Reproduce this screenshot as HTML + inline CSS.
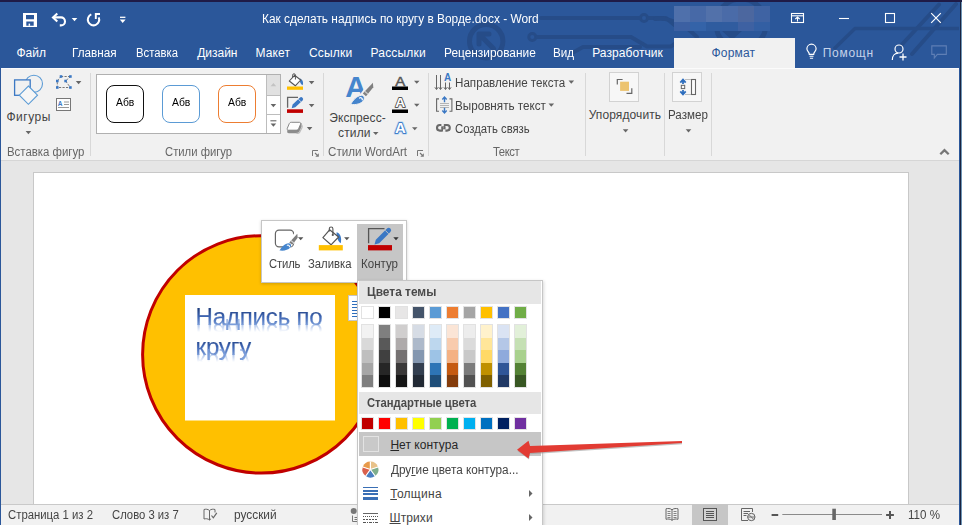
<!DOCTYPE html>
<html lang="ru">
<head>
<meta charset="utf-8">
<title>Word</title>
<style>
html,body{margin:0;padding:0;}
html{width:962px;height:525px;overflow:hidden;}
body{width:962px;height:525px;overflow:hidden;position:relative;background:#2b579a;font-family:"Liberation Sans",sans-serif;font-size:13px;}
.a{position:absolute;}
.t{position:absolute;white-space:nowrap;line-height:16px;height:16px;transform-origin:0 50%;}
#topline{left:0;top:0;width:962px;height:2px;background:#1f1b47;}
#rdark{left:960px;top:0;width:1px;height:525px;background:#1a2340;}
#rlight{left:961px;top:2px;width:1px;height:523px;background:#6f96b6;}
#title{left:0;top:2px;width:959px;height:66px;background:#2b579a;overflow:hidden;}
#ribbon{left:1px;top:68px;width:958px;height:92px;background:#f1f1f1;border-top:1px solid #fbfbfb;box-sizing:border-box;}
#ribline{left:1px;top:160px;width:958px;height:1px;background:#d6d6d6;}
#doc{left:1px;top:161px;width:958px;height:343px;background:#e6e6e6;}
#page{left:33px;top:172px;width:874px;height:340px;background:#fff;border:1px solid #c8c8c8;}
#status{left:1px;top:504px;width:958px;height:21px;background:#f1f1f1;border-top:1px solid #c9c9c9;box-sizing:border-box;}
#fmt{left:674px;top:38px;width:121px;height:30px;background:#f1f1f1;}
.sep{position:absolute;width:1px;background:#d8d8d8;top:73px;height:83px;}
svg{position:absolute;overflow:visible;}
</style>
</head>
<body>
<div id="w" style="position:absolute;left:0;top:0;width:962px;height:525px;overflow:hidden">
<div class="a" id="title">
<svg width="959" height="66" viewBox="0 2 959 66" style="left:0;top:0" fill="none" stroke="#264c88" stroke-width="4" stroke-linecap="round" stroke-linejoin="round">
<circle cx="486.200" cy="41.200" r="16.700" stroke-width="5"/>
<path d="M493.600 48.700 L479.500 34.500 M479 44 V34 H489" stroke-width="5"/>
<circle cx="532.300" cy="37" r="3.500" stroke-width="3"/>
<path d="M537 37 H631 L647 46.500 H671 L677 42"/>
<circle cx="644" cy="18" r="3.500" stroke-width="3"/>
<path d="M541 18 H639.500 M648.500 18 H666 L675 25.500 H700"/>
<path d="M574 52 L583 47 H640"/>
<circle cx="741" cy="24" r="25" stroke-width="5"/>
<path d="M722 31 H742 L732 40 Z" fill="#264c88" stroke="none"/>
<path d="M655 19 C670 17 684 24 697 37"/>
<path d="M835 48 L855 28.500 H960" stroke-width="3.500"/>
<path d="M901 45.500 L939 4.500"/>
<path d="M912 54 L956 4"/>
</svg>
<div class="a" style="left:674px;top:4px;width:16px;height:16px;background:#4f70ab"></div>
<div class="a" style="left:690px;top:4px;width:16px;height:16px;background:#4769a7"></div>
<div class="a" style="left:706px;top:4px;width:16px;height:16px;background:#5271aa"></div>
<div class="a" style="left:722px;top:4px;width:16px;height:16px;background:#4a6ba8"></div>
<div class="a" style="left:738px;top:4px;width:16px;height:16px;background:#4c679f"></div>
<div class="a" style="left:754px;top:4px;width:16px;height:16px;background:#3f63a3"></div>
<div class="a" style="left:674px;top:20px;width:16px;height:9px;background:#3c60a2"></div>
<div class="a" style="left:690px;top:20px;width:16px;height:9px;background:#3463a8"></div>
<div class="a" style="left:706px;top:20px;width:16px;height:9px;background:#2f5c9f"></div>
<div class="a" style="left:722px;top:20px;width:16px;height:9px;background:#305c9f"></div>
<div class="a" style="left:738px;top:20px;width:16px;height:9px;background:#3e61a2"></div>
<div class="a" style="left:754px;top:20px;width:16px;height:9px;background:#335fa3"></div>

</div>
<div class="a" id="topline"></div>
<div class="a" id="rdark"></div>
<div class="a" id="rlight"></div>
<div class="a" id="fmt"></div>
<div class="a" id="ribbon"></div>
<div class="a" id="ribline"></div>
<div class="a" id="doc"></div>
<div class="a" id="page"></div>
<div class="a" id="status"></div>
<!-- left window border -->
<div class="a" style="left:0;top:68px;width:1px;height:457px;background:#2b579a"></div>
<div class="a" style="left:959px;top:2px;width:1px;height:523px;background:#2b579a"></div>
<!-- QAT icons -->
<svg width="962" height="66" style="left:0;top:0" fill="none" stroke="#fff" stroke-width="1.6">
 <!-- save -->
 <path d="M23 13 H37 V27 H23 Z M26 15 V19.300 H34 V15 Z M26.300 21.600 V25.800 H33.700 V21.600 Z" fill="#fff" stroke="none" fill-rule="evenodd"/>
 <rect x="28.600" y="23.600" width="1.500" height="2.200" fill="#fff" stroke="none"/>
 <!-- undo -->
 <path d="M57.300 13.400 L53 17.400 L57.300 21.400" stroke-width="2.100" stroke-linejoin="miter"/>
 <path d="M53.500 17.400 H61 A4 4 0 0 1 61 25.400 H59.800" stroke-width="2.100"/>
 <path d="M71.700 18 h5.600 l-2.800 3.200 z" fill="#fff" stroke="none"/>
 <!-- redo/repeat -->
 <path d="M91.300 14.400 A5.700 5.700 0 1 0 98.700 17.300" stroke-width="2"/>
 <path d="M100 14 H95.800 V19" stroke-width="1.900" stroke-linejoin="miter"/>
 <!-- customize -->
 <path d="M120 17.300 h5.400" stroke-width="1.300"/>
 <path d="M119.800 19.600 h5.800 l-2.900 3.300 z" fill="#fff" stroke="none"/>
 <!-- window buttons -->
 <rect x="791.5" y="13.5" width="12" height="9" stroke-width="1.1"/>
 <path d="M791.5 15.8 H803.5" stroke-width="1.1"/>
 <path d="M797.5 21.5 V17.2 M795.2 19.2 L797.5 17 L799.8 19.2" stroke-width="1.1"/>
 <path d="M839 18.5 H849" stroke-width="1.1"/>
 <rect x="885.5" y="13.5" width="9" height="9" stroke-width="1.1"/>
 <path d="M931.2 13.2 L940.8 22.8 M940.8 13.2 L931.2 22.8" stroke-width="1.2"/>
 <!-- bulb -->
 <path d="M809.3 54.3 C809.3 52 806.9 51.3 806.9 48.8 A4.6 4.6 0 0 1 816.1 48.800000000000004 C816.1 51.3 813.7 52 813.7 54.3 Z" stroke-width="1.2"/>
 <path d="M809.5 56.3 H813.5 M809.9 58.3 H813.1" stroke-width="1.1"/>
 <!-- share -->
 <circle cx="899" cy="49" r="4" stroke-width="1.2"/>
 <path d="M892.3 60 C892.3 55.5 895 53.2 898.2 53.2" stroke-width="1.2"/>
 <path d="M899.5 57 H906.5 M903 53.5 V60.5" stroke-width="1.3"/>
 <!-- comment -->
 <path d="M931.8 45.9 H946.3 V54.4 H937.3 L934.3 58 V54.4 H931.8 Z" stroke="#5f7fb5" stroke-width="1.1"/>
</svg>
<!-- ribbon separators -->
<div class="sep" style="left:90px"></div>
<div class="sep" style="left:323px"></div>
<div class="sep" style="left:428px"></div>
<div class="sep" style="left:585px"></div>
<div class="sep" style="left:664px"></div>
<div class="sep" style="left:711px"></div>
<!-- gallery -->
<div class="a" style="left:96px;top:74px;width:185px;height:60px;background:#fff;border:1px solid #b0b0b0;box-sizing:border-box"></div>
<div class="a" style="left:266px;top:75px;width:14px;height:21px;background:#e1e1e1;border-left:1px solid #bdbdbd;border-bottom:1px solid #bdbdbd;box-sizing:border-box"></div>
<div class="a" style="left:266px;top:96px;width:14px;height:19px;border-left:1px solid #bdbdbd;border-bottom:1px solid #bdbdbd;box-sizing:border-box"></div>
<div class="a" style="left:266px;top:115px;width:14px;height:18px;border-left:1px solid #bdbdbd;box-sizing:border-box"></div>
<div class="a" style="left:106px;top:85px;width:38px;height:38px;border:1.5px solid #111;border-radius:8px;box-sizing:border-box"></div>
<div class="a" style="left:162px;top:85px;width:38px;height:38px;border:1.5px solid #5b9bd5;border-radius:8px;box-sizing:border-box"></div>
<div class="a" style="left:218px;top:85px;width:38px;height:38px;border:1.5px solid #ed7d31;border-radius:8px;box-sizing:border-box"></div>
<!-- ribbon icons -->
<svg width="962" height="170" style="left:0;top:0" fill="none">
 <!-- gallery arrows -->
 <path d="M270.600 86.200 h5.600 l-2.800 -3.200 z" fill="#c3c3c3"/>
 <path d="M270.600 104 h5.600 l-2.800 3.200 z" fill="#666"/>
 <path d="M270.400 120.800 h6" stroke="#666" stroke-width="1.100"/>
 <path d="M270.600 123.600 h5.600 l-2.800 3.200 z" fill="#666"/>
 <!-- shapes big icon -->
 <circle cx="33.900" cy="83.800" r="8.600" stroke="#5b9bd5" stroke-width="1.100" fill="none"/>
 <rect x="14.600" y="79.900" width="15.600" height="15.400" stroke="#3b78c4" stroke-width="1.300" fill="#f1f1f1"/>
 <path d="M28.400 86 L37.500 95.200 L28.400 104.300 L19.300 95.200 Z" stroke="#5b9bd5" stroke-width="1.100" fill="#f6f6f6"/>
 <path d="M25.600 131 h5.600 l-2.800 3.200 z" fill="#666"/>
 <!-- edit points -->
 <path d="M61 76.500 H70.400 M61 76.500 L57.300 81 V87.500 H70.400 M70.400 76.500 L65.600 81 L70.400 87.500" stroke="#777" stroke-width="1" stroke-dasharray="2.200 1.300"/>
 <g fill="#3b78c4"><rect x="59.700" y="75.200" width="2.600" height="2.600"/><rect x="69.100" y="75.200" width="2.600" height="2.600"/><rect x="56" y="79.700" width="2.600" height="2.600"/><rect x="64.300" y="79.700" width="2.600" height="2.600"/><rect x="56" y="86.200" width="2.600" height="2.600"/><rect x="69.100" y="86.200" width="2.600" height="2.600"/></g>
 <path d="M75.800 81 h5.600 l-2.800 3.200 z" fill="#666"/>
 <!-- text box -->
 <rect x="56.500" y="98.500" width="14" height="12" stroke="#777" stroke-width="1" fill="#fdfdfd"/>
 <text x="57.800" y="105.600" font-family="Liberation Sans" font-weight="bold" font-size="6.500" fill="#3b78c4">A</text>
 <path d="M64 102 H69 M64 104.500 H69 M58 107.500 H69" stroke="#999" stroke-width="1"/>
 <!-- shape fill -->
 <path d="M299.700 78.500 C302.500 79 303.800 82.500 302.600 85.200 C300.600 84.500 299.500 81.500 299.700 78.500 Z" fill="#3b78c4"/>
 <path d="M289.300 81 L294.600 75.300 L300.700 80 L295.300 85.800 Z" stroke="#555" stroke-width="1.100" fill="#fff" stroke-linejoin="round"/>
 <path d="M295.400 79.500 V75.200 A1.400 1.400 0 0 0 292.600 75.200 V77.300" stroke="#555" stroke-width="1" fill="none"/>
 <rect x="287" y="86.500" width="16" height="3.300" fill="#ffc000"/>
 <path d="M308.800 81 h5.600 l-2.800 3.200 z" fill="#666"/>
 <!-- shape outline -->
 <path d="M287.600 107.800 V97.300 H298" stroke="#666" stroke-width="1.300"/>
 <path d="M291.700 108.200 L292.600 104.600 L299.800 97.800 A1.800 1.800 0 0 1 302.600 100.400 L295.300 107.300 Z" fill="#3b78c4"/>
 <path d="M298.400 99.200 L301.100 101.900" stroke="#f1f1f1" stroke-width=".8"/>
 <rect x="287" y="109.300" width="16" height="3.600" fill="#c00000"/>
 <path d="M308.800 104 h5.600 l-2.800 3.200 z" fill="#666"/>
 <!-- shape effects -->
 <path d="M291.500 123 H300 C302 123 302.600 124.500 301.800 126.200 L299.500 131.300 C298.800 132.800 297.500 133.300 296 133.300 H289 C287.300 133.300 286.700 132 287.500 130.300 L289.500 125 C290 123.700 290.500 123 291.500 123 Z" fill="#8c8c8c"/>
 <path d="M300.500 124.500 C302.300 125 302.500 126.500 301.800 128 L299.800 132 C299 133 297.500 133.500 296.500 133.200" stroke="#bdbdbd" stroke-width="1.300" fill="none"/>
 <path d="M291.300 122.300 H299.300 C300.600 122.300 301 123.200 300.500 124.300 L298.700 128.600 C298.200 129.700 297.400 130.200 296.200 130.200 H288.400 C287.200 130.200 286.900 129.400 287.300 128.300 L289.200 123.800 C289.600 122.800 290.200 122.300 291.300 122.300 Z" fill="#fefefe" stroke="#7a7a7a" stroke-width=".9"/>
 <path d="M306.800 127 h5.600 l-2.800 3.200 z" fill="#666"/>
 <!-- dialog launchers -->
 <path d="M312.5 156.0 V150.5 H318.0" stroke="#777" stroke-width="1" fill="none"/>
 <path d="M315.0 153.0 L317.5 155.5" stroke="#777" stroke-width="1.100"/>
 <path d="M318.8 153.3 V156.8 H315.3 Z" fill="#777"/>
 <path d="M417.5 156.0 V150.5 H423.0" stroke="#777" stroke-width="1" fill="none"/>
 <path d="M420.0 153.0 L422.5 155.5" stroke="#777" stroke-width="1.100"/>
 <path d="M423.8 153.3 V156.8 H420.3 Z" fill="#777"/>
 <!-- WordArt quick styles A -->
 <text x="345.300" y="96.800" font-family="Liberation Sans" font-weight="bold" font-size="28.800" fill="#4585cd" textLength="21.400" lengthAdjust="spacingAndGlyphs">A</text>
 <path d="M362 97.500 L372 84.500" stroke="#f1f1f1" stroke-width="7"/>
 <path d="M372.900 82.800 L373.300 87.300 L366 96.200 L362.800 93.600 Z" fill="#808080"/>
 <path d="M364.700 91.300 L367.900 93.900" stroke="#c8c8c8" stroke-width="1.300"/>
 <path d="M350.500 104.500 C353 100.500 356 96 361.500 95.300 C364.500 95.600 365 98.500 363.500 100.500 C361 104 356 105 350.500 104.500 Z" fill="#4585cd" stroke="#f1f1f1" stroke-width="1"/>
 <path d="M359.500 98 C361 97.300 362.500 98 362.300 99.800" stroke="#fff" stroke-width="1.300" fill="none" stroke-linecap="round"/>
 <path d="M373 132 h5.500 l-2.750 3 z" fill="#666"/>
 <!-- text fill A -->
 <text x="395.200" y="85.800" font-family="Liberation Sans" font-size="13.500" fill="#555" stroke="#555" stroke-width=".45" textLength="10" lengthAdjust="spacingAndGlyphs">A</text>
 <rect x="392" y="86.500" width="16" height="3.500" fill="#000"/>
 <path d="M414 80.800 h5.500 l-2.750 3 z" fill="#666"/>
 <!-- text outline A -->
 <text x="395.300" y="107.400" font-family="Liberation Sans" font-weight="bold" font-size="13.500" fill="#555" stroke="#555" stroke-width="1.800" stroke-linejoin="round" textLength="10" lengthAdjust="spacingAndGlyphs">A</text>
 <text x="395.300" y="107.400" font-family="Liberation Sans" font-weight="bold" font-size="13.500" fill="#fff" textLength="10" lengthAdjust="spacingAndGlyphs">A</text>
 <rect x="392" y="109.500" width="16" height="3.500" fill="#000"/>
 <path d="M414 103.800 h5.500 l-2.750 3 z" fill="#666"/>
 <!-- text effects A -->
 <text x="394.900" y="132.600" font-family="Liberation Sans" font-weight="bold" font-size="15.500" fill="#b9d4ef" stroke="#c4dbf2" stroke-width="3.600" stroke-linejoin="round" textLength="10.800" lengthAdjust="spacingAndGlyphs">A</text>
 <text x="394.900" y="132.600" font-family="Liberation Sans" font-weight="bold" font-size="15.500" fill="#3f7dc8" stroke="#3f7dc8" stroke-width="2" stroke-linejoin="round" textLength="10.800" lengthAdjust="spacingAndGlyphs">A</text>
 <text x="394.900" y="132.600" font-family="Liberation Sans" font-weight="bold" font-size="15.500" fill="#fff" textLength="10.800" lengthAdjust="spacingAndGlyphs">A</text>
 <path d="M412 127.300 h5.500 l-2.750 3 z" fill="#666"/>
 <!-- text direction icon -->
 <path d="M436.500 75 V89 M440.500 75 V89 M445.500 82.500 V89 M449.500 82.500 V89" stroke="#666" stroke-width="1"/>
 <path d="M434.900 87.300 l1.600 2.300 l1.600 -2.300 M438.900 87.300 l1.600 2.300 l1.600 -2.300 M443.900 87.300 l1.600 2.300 l1.600 -2.300 M447.900 87.300 l1.600 2.300 l1.600 -2.300" stroke="#666" stroke-width="1" fill="none"/>
 <text x="444" y="81.400" font-family="Liberation Sans" font-weight="bold" font-size="10" fill="#3b78c4" textLength="7.200" lengthAdjust="spacingAndGlyphs">A</text>
 <!-- align text icon -->
 <path d="M439 98.900 H436.600 V111.300 H439 M449.500 98.900 H451.900 V111.300 H449.500" stroke="#666" stroke-width="1.100"/>
 <path d="M440 103.500 H449 M440 105.500 H449 M440 107.500 H449" stroke="#b4b4b4" stroke-width="1" shape-rendering="crispEdges"/>
 <path d="M444.500 97.300 V102.300 M442.300 99.500 L444.500 97.100 L446.700 99.500 M444.500 107.800 V112.800 M442.300 110.500 L444.500 112.900 L446.700 110.500" stroke="#3b78c4" stroke-width="1.400" fill="none"/>
 <rect x="443.300" y="102.500" width="2.400" height="5.600" fill="#f1f1f1" opacity="0"/>
 <!-- link icon -->
 <rect x="437" y="125" width="7.600" height="5.600" rx="2.800" stroke="#6a6a6a" stroke-width="2.100" fill="none"/>
 <rect x="442.200" y="125" width="7.600" height="5.600" rx="2.800" stroke="#6a6a6a" stroke-width="2.100" fill="none"/>
 <path d="M441.400 125 H443.800" stroke="#f1f1f1" stroke-width="2.600"/>
 <path d="M443 130.600 H445.400" stroke="#f1f1f1" stroke-width="2.600"/>
 <path d="M440.200 125 H444.600 M442.200 130.600 H446.600" stroke="#6a6a6a" stroke-width="2.100" opacity="0"/>
 <path d="M568.500 80.500 h5.600 l-2.800 3.200 z" fill="#666"/>
 <path d="M548.500 103.500 h5.600 l-2.800 3.200 z" fill="#666"/>
 <!-- arrange -->
 <rect x="609.500" y="72.500" width="29" height="29" fill="#f7f7f7" stroke="#d2d2d2"/>
 <path d="M617.300 84.500 V79.500 H622.600" stroke="#666" stroke-width="1.200"/>
 <path d="M626.500 93.400 H631.800 V88.300" stroke="#666" stroke-width="1.200"/>
 <rect x="620.100" y="81.700" width="8.900" height="9.200" fill="#ecc36f"/>
 <path d="M622.800 129.300 h5.600 l-2.800 3.200 z" fill="#666"/>
 <!-- size -->
 <rect x="672.500" y="72.500" width="29" height="29" fill="#f7f7f7" stroke="#d2d2d2"/>
 <rect x="691.500" y="79.500" width="4" height="15" stroke="#666" stroke-width="1.100" fill="#fbfbfb"/>
 <path d="M685.500 79.500 H691 M685.500 94.500 H691" stroke="#888" stroke-width="1" stroke-dasharray="1 1"/>
 <path d="M683 79.800 V84 M680.300 82.600 L683 79.600 L685.700 82.600 M683 90 V94.200 M680.300 91.400 L683 94.400 L685.700 91.400" stroke="#2e6ebd" stroke-width="1.800" fill="none"/>
 <rect x="681.300" y="85.300" width="3.400" height="3.300" stroke="#666" stroke-width="1" fill="#fbfbfb"/>
 <path d="M685.700 129.300 h5.600 l-2.800 3.200 z" fill="#666"/>
 <!-- collapse chevron -->
 <path d="M940.300 154.300 L944.500 150.100 L948.700 154.300" stroke="#777" stroke-width="2.300"/>
</svg>
<!-- circle + textbox -->
<svg width="962" height="525" style="left:0;top:0">
 <defs>
  <linearGradient id="tg" x1="0" y1="0" x2="0" y2="1"><stop offset="0" stop-color="#2b4f94"/><stop offset="1" stop-color="#7fa2dc"/></linearGradient>
 </defs>
 <circle cx="261.300" cy="354.400" r="118.700" fill="#ffc000" stroke="#c00000" stroke-width="3"/>
 <rect x="185" y="295" width="150" height="125.500" fill="#fff"/>
</svg>
<!-- status bar icons -->
<svg width="962" height="525" style="left:0;top:0" fill="none">
 <rect x="692" y="504" width="36" height="21" fill="#c6c6c6"/>
 <!-- proofing -->
 <path d="M209.500 510.500 C208 509 205.500 509 204 509.500 V519 C205.500 518.500 208 518.500 209.500 520 M209.500 510.500 V520 M209.500 510.500 C211 509 213.500 509 215 509.500 V512.500 M209.500 520 C210 519.500 210.500 519.200 211 519" stroke="#666" stroke-width="1"/>
 <path d="M211.500 515.500 L213.300 517.800 L216.800 512.800" stroke="#666" stroke-width="1.200"/>
 <!-- read mode -->
 <path d="M672 509.800 C670.500 508.300 667.500 508.300 666 508.800 V519.300 C667.500 518.800 670.500 518.800 672 520.300 C673.500 518.800 676.500 518.800 678 519.300 V508.800 C676.500 508.300 673.500 508.300 672 509.800 Z M672 509.800 V520.300" stroke="#666" stroke-width="1"/>
 <path d="M667.500 511.500 H670.500 M667.500 513.500 H670.500 M667.500 515.500 H670.500 M667.500 517.500 H670.500 M673.500 511.500 H676.500 M673.500 513.500 H676.500 M673.500 515.500 H676.500 M673.500 517.500 H676.500" stroke="#777" stroke-width=".9"/>
 <!-- print layout -->
 <rect x="703.500" y="508.500" width="13" height="12" stroke="#555" stroke-width="1" fill="#d2d2d2"/>
 <path d="M706 511.500 H714 M706 513.500 H714 M706 515.500 H714 M706 517.500 H714" stroke="#555" stroke-width="1" shape-rendering="crispEdges"/>
 <!-- web layout -->
 <path d="M748 520.500 H741.500 V508.500 H752.500 V512" stroke="#666" stroke-width="1"/>
 <path d="M743.500 511.500 H750 M743.500 513.500 H748 M743.500 515.500 H746.500" stroke="#666" stroke-width="1"/>
 <circle cx="751.300" cy="517" r="3.700" stroke="#666" stroke-width="1" fill="#e9e9e9"/>
 <path d="M748.700 514.400 L753.900 519.600 M747.800 517 H754.800" stroke="#666" stroke-width=".9"/>
 <!-- zoom -->
 <path d="M771.600 515 H778.200" stroke="#555" stroke-width="2"/>
 <path d="M782.300 514.500 H882" stroke="#8a8a8a" stroke-width="1"/>
 <rect x="832.300" y="508.700" width="3.600" height="11.300" fill="#666"/>
 <path d="M886.100 515 H893.900 M890 511.100 V518.900" stroke="#555" stroke-width="2"/>
</svg>
<!-- wordart text -->
<div class="a wa" style="left:195.600px;top:302.500px;">Надпись по</div>
<div class="a wa" style="left:195.600px;top:332.500px;">кругу</div>
<div class="a wa wr" style="left:195.600px;top:318.300px;">Надпись по</div>
<div class="a wa wr" style="left:195.600px;top:348.300px;">кругу</div>
<style>
.wa{font-size:24px;line-height:28px;letter-spacing:-.17px;white-space:nowrap;color:transparent;-webkit-text-stroke:.12px #4468b0;background:linear-gradient(#21407f 22%,#3e66b4 50%,#7fa2dd 82%);-webkit-background-clip:text;background-clip:text;}
.wr{transform:scaleY(-1);-webkit-text-stroke:0;background:#7ea0dc;-webkit-background-clip:text;background-clip:text;-webkit-mask-image:linear-gradient(transparent 50%,rgba(0,0,0,.7) 80%);mask-image:linear-gradient(transparent 50%,rgba(0,0,0,.7) 80%);}
</style>

<span class="t" style="left:262.21px;top:10.7px;font-size:12px;color:#fff;transform:scaleX(0.990);">Как сделать надпись по кругу в Ворде.docx - Word</span>
<span class="t" style="left:16.47px;top:44.8px;font-size:12px;color:#fff;">Файл</span>
<span class="t" style="left:71.85px;top:44.8px;font-size:12px;color:#fff;transform:scaleX(0.978);">Главная</span>
<span class="t" style="left:135.87px;top:44.8px;font-size:12px;color:#fff;transform:scaleX(0.940);">Вставка</span>
<span class="t" style="left:197.13px;top:44.8px;font-size:12px;color:#fff;">Дизайн</span>
<span class="t" style="left:255.53px;top:44.8px;font-size:12px;color:#fff;letter-spacing:0.12px;">Макет</span>
<span class="t" style="left:308.97px;top:44.8px;font-size:12px;color:#fff;letter-spacing:0.18px;">Ссылки</span>
<span class="t" style="left:370.52px;top:44.8px;font-size:12px;color:#fff;letter-spacing:0.18px;">Рассылки</span>
<span class="t" style="left:443.82px;top:44.8px;font-size:12px;color:#fff;transform:scaleX(0.990);">Рецензирование</span>
<span class="t" style="left:553.23px;top:44.8px;font-size:12px;color:#fff;transform:scaleX(0.968);">Вид</span>
<span class="t" style="left:592.20px;top:44.8px;font-size:12px;color:#fff;letter-spacing:0.06px;">Разработчик</span>
<span class="t" style="left:711.47px;top:44.8px;font-size:12px;color:#2b579a;letter-spacing:0.19px;">Формат</span>
<span class="t" style="left:822.63px;top:44.8px;font-size:12px;color:#c5d3ea;letter-spacing:0.75px;">Помощн</span>
<span class="t" style="left:6.47px;top:109.0px;font-size:12px;color:#444444;letter-spacing:0.52px;">Фигуры</span>
<span class="t" style="left:6.87px;top:144.0px;font-size:12px;color:#666666;transform:scaleX(0.951);">Вставка фигур</span>
<span class="t" style="left:116.00px;top:94.0px;font-size:11px;color:#000;transform:scaleX(0.940);">Абв</span>
<span class="t" style="left:171.80px;top:94.0px;font-size:11px;color:#000;transform:scaleX(0.944);">Абв</span>
<span class="t" style="left:227.80px;top:94.0px;font-size:11px;color:#000;transform:scaleX(0.944);">Абв</span>
<span class="t" style="left:164.86px;top:144.0px;font-size:12px;color:#666666;transform:scaleX(0.940);">Стили фигур</span>
<span class="t" style="left:329.22px;top:109.5px;font-size:12px;color:#444444;letter-spacing:0.09px;">Экспресс-</span>
<span class="t" style="left:338.02px;top:124.5px;font-size:12px;color:#444444;letter-spacing:0.14px;">стили</span>
<span class="t" style="left:327.86px;top:144.0px;font-size:12px;color:#666666;transform:scaleX(0.967);">Стили WordArt</span>
<span class="t" style="left:455.04px;top:75.2px;font-size:12px;color:#444444;transform:scaleX(0.969);">Направление текста</span>
<span class="t" style="left:455.04px;top:97.9px;font-size:12px;color:#444444;transform:scaleX(0.973);">Выровнять текст</span>
<span class="t" style="left:455.24px;top:121.0px;font-size:12px;color:#444444;transform:scaleX(0.940);">Создать связь</span>
<span class="t" style="left:492.94px;top:144.0px;font-size:12px;color:#666666;letter-spacing:-0.45px;transform:scaleX(0.940);">Текст</span>
<span class="t" style="left:588.66px;top:107.0px;font-size:12px;color:#444444;letter-spacing:0.10px;">Упорядочить</span>
<span class="t" style="left:667.86px;top:107.0px;font-size:12px;color:#444444;transform:scaleX(0.966);">Размер</span>
<span class="t" style="left:8.00px;top:506.5px;font-size:12px;color:#444444;transform:scaleX(0.945);">Страница 1 из 2</span>
<span class="t" style="left:112.00px;top:506.5px;font-size:12px;color:#444444;transform:scaleX(0.940);">Слово 3 из 7</span>
<span class="t" style="left:234.02px;top:506.5px;font-size:12px;color:#444444;transform:scaleX(0.989);">русский</span>
<span class="t" style="left:908.26px;top:506.5px;font-size:12px;color:#444444;transform:scaleX(0.965);">110 %</span>
<div class="a" style="left:348px;top:295px;width:14px;height:26px;background:#fff;border:1px solid #c6c6c6;box-sizing:border-box"></div>
<svg width="20" height="30" style="left:348px;top:295px" fill="none" stroke="#2e6ebd" stroke-width="1.2"><path d="M4 6.500 H12 M4 9.500 H12 M4 12.500 H12 M4 15.500 H12 M4 18.500 H12 M4 21.500 H12"/></svg>
<div class="a" style="left:261px;top:220px;width:146px;height:63px;background:#fff;border:1px solid #c6c6c6;box-sizing:border-box;box-shadow:0 1px 3px rgba(0,0,0,.18)"></div>
<div class="a" style="left:357px;top:224px;width:46px;height:57px;background:#c6c6c6"></div>
<svg width="962" height="300" style="left:0;top:0" fill="none">
 <!-- style icon -->
 <rect x="275.400" y="230.200" width="18.200" height="16.600" rx="3.600" stroke="#666" stroke-width="1.200" fill="#fff"/>
 <path d="M286.500 247.500 L297.500 234" stroke="#fff" stroke-width="6"/>
 <path d="M297.300 233.800 L297.700 237.800 L292.300 244.800 L289.300 242.500 Z" fill="#7d7d7d"/>
 <path d="M290.900 240.600 L293.900 242.900" stroke="#d0d0d0" stroke-width="1.200"/>
 <path d="M279.500 250.500 C281.500 247 284.500 243.600 288.800 243.300 C291.300 243.600 291.600 246 290.300 247.600 C288 250.300 284 251 279.500 250.500 Z" fill="#4585cd"/>
 <path d="M287.300 245.300 C288.500 244.800 289.600 245.400 289.400 246.800" stroke="#fff" stroke-width="1.100" fill="none" stroke-linecap="round"/>
 <path d="M298 237.200 h5.400 l-2.700 3 z" fill="#555"/>
 <!-- fill icon -->
 <path d="M336.600 232.200 C340.300 233 342 238 340.700 243.200 C338 241.500 336.300 236.500 336.600 232.200 Z" fill="#3b78c4"/>
 <path d="M322.900 237.600 L329.600 229.800 L338.600 237 L331 244.800 Z" stroke="#555" stroke-width="1.200" fill="#fff" stroke-linejoin="round"/>
 <path d="M329.300 231.500 V228.800 A1.800 1.800 0 0 1 332.900 228.800 V234" stroke="#555" stroke-width="1.100" fill="none"/>
 <circle cx="332.800" cy="234.900" r="1.100" fill="#555"/>
 <rect x="318.800" y="245.100" width="24" height="5.300" fill="#ffc000"/>
 <path d="M344.100 237.200 h5.400 l-2.700 3 z" fill="#555"/>
 <!-- outline icon -->
 <path d="M368.600 243.300 V228.600 H384.500" stroke="#555" stroke-width="1.300"/>
 <path d="M374.500 244.600 L375.800 239.800 L387 228.600 A2.300 2.300 0 0 1 390.400 232 L379.200 243.200 Z" fill="#3b78c4"/>
 <path d="M385.200 230.300 L388.700 233.800" stroke="#c6c6c6" stroke-width=".9"/>
 <rect x="368" y="245.100" width="24" height="5.300" fill="#c00000"/>
 <path d="M393.300 237.200 h5.400 l-2.700 3 z" fill="#333"/>
</svg>
<svg width="20" height="20" style="left:348px;top:506px" fill="none"><circle cx="5.700" cy="5" r="3" fill="#777"/><path d="M4.500 9.500 V15.500 H10 M6.500 11.500 H10 M6.500 13.500 H10" stroke="#777" stroke-width="1"/></svg>
<div class="a" style="left:357px;top:280px;width:186px;height:250px;background:#fff;border:1px solid #c6c6c6;box-sizing:border-box;box-shadow:1px 1px 3px rgba(0,0,0,.15)"></div>
<div class="a" style="left:359px;top:281px;width:182px;height:23px;background:#e6e6e6"></div>
<div class="a" style="left:359px;top:392px;width:182px;height:22px;background:#e6e6e6"></div>
<div class="a" style="left:359px;top:432px;width:182px;height:24px;background:#c6c6c6"></div>
<div class="a" style="left:363px;top:436px;width:16px;height:16px;border:1px solid #e3e3e3;box-sizing:border-box;background:#c9c9c9"></div>
<svg width="962" height="525" style="left:0;top:0" shape-rendering="crispEdges"><rect x="361.5" y="306.500" width="12" height="12" fill="#FFFFFF" stroke="#e2e2e2"/><rect x="378.5" y="306.500" width="12" height="12" fill="#000000" stroke="#e2e2e2"/><rect x="395.5" y="306.500" width="12" height="12" fill="#E7E6E6" stroke="#e2e2e2"/><rect x="412.5" y="306.500" width="12" height="12" fill="#44546A" stroke="#e2e2e2"/><rect x="429.5" y="306.500" width="12" height="12" fill="#5B9BD5" stroke="#e2e2e2"/><rect x="446.5" y="306.500" width="12" height="12" fill="#ED7D31" stroke="#e2e2e2"/><rect x="463.5" y="306.500" width="12" height="12" fill="#A5A5A5" stroke="#e2e2e2"/><rect x="480.5" y="306.500" width="12" height="12" fill="#FFC000" stroke="#e2e2e2"/><rect x="497.5" y="306.500" width="12" height="12" fill="#4472C4" stroke="#e2e2e2"/><rect x="514.5" y="306.500" width="12" height="12" fill="#70AD47" stroke="#e2e2e2"/><rect x="361.5" y="324.500" width="12" height="63" fill="none" stroke="#e2e2e2"/><rect x="362" y="325" width="11" height="12.5" fill="#F2F2F2"/><rect x="362" y="337.5" width="11" height="12.5" fill="#D9D9D9"/><rect x="362" y="350" width="11" height="12.5" fill="#BFBFBF"/><rect x="362" y="362.5" width="11" height="12.5" fill="#A6A6A6"/><rect x="362" y="375" width="11" height="12" fill="#7F7F7F"/><rect x="378.5" y="324.500" width="12" height="63" fill="none" stroke="#e2e2e2"/><rect x="379" y="325" width="11" height="12.5" fill="#7F7F7F"/><rect x="379" y="337.5" width="11" height="12.5" fill="#595959"/><rect x="379" y="350" width="11" height="12.5" fill="#404040"/><rect x="379" y="362.5" width="11" height="12.5" fill="#262626"/><rect x="379" y="375" width="11" height="12" fill="#0D0D0D"/><rect x="395.5" y="324.500" width="12" height="63" fill="none" stroke="#e2e2e2"/><rect x="396" y="325" width="11" height="12.5" fill="#D0CECE"/><rect x="396" y="337.5" width="11" height="12.5" fill="#AEAAAA"/><rect x="396" y="350" width="11" height="12.5" fill="#757171"/><rect x="396" y="362.5" width="11" height="12.5" fill="#3A3838"/><rect x="396" y="375" width="11" height="12" fill="#161616"/><rect x="412.5" y="324.500" width="12" height="63" fill="none" stroke="#e2e2e2"/><rect x="413" y="325" width="11" height="12.5" fill="#D6DCE5"/><rect x="413" y="337.5" width="11" height="12.5" fill="#ADB9CA"/><rect x="413" y="350" width="11" height="12.5" fill="#8497B0"/><rect x="413" y="362.5" width="11" height="12.5" fill="#333F50"/><rect x="413" y="375" width="11" height="12" fill="#222A35"/><rect x="429.5" y="324.500" width="12" height="63" fill="none" stroke="#e2e2e2"/><rect x="430" y="325" width="11" height="12.5" fill="#DEEBF7"/><rect x="430" y="337.5" width="11" height="12.5" fill="#BDD7EE"/><rect x="430" y="350" width="11" height="12.5" fill="#9DC3E6"/><rect x="430" y="362.5" width="11" height="12.5" fill="#2E75B6"/><rect x="430" y="375" width="11" height="12" fill="#1F4E79"/><rect x="446.5" y="324.500" width="12" height="63" fill="none" stroke="#e2e2e2"/><rect x="447" y="325" width="11" height="12.5" fill="#FBE5D6"/><rect x="447" y="337.5" width="11" height="12.5" fill="#F8CBAD"/><rect x="447" y="350" width="11" height="12.5" fill="#F4B183"/><rect x="447" y="362.5" width="11" height="12.5" fill="#C55A11"/><rect x="447" y="375" width="11" height="12" fill="#843C0B"/><rect x="463.5" y="324.500" width="12" height="63" fill="none" stroke="#e2e2e2"/><rect x="464" y="325" width="11" height="12.5" fill="#EDEDED"/><rect x="464" y="337.5" width="11" height="12.5" fill="#DBDBDB"/><rect x="464" y="350" width="11" height="12.5" fill="#C9C9C9"/><rect x="464" y="362.5" width="11" height="12.5" fill="#7C7C7C"/><rect x="464" y="375" width="11" height="12" fill="#525252"/><rect x="480.5" y="324.500" width="12" height="63" fill="none" stroke="#e2e2e2"/><rect x="481" y="325" width="11" height="12.5" fill="#FFF2CC"/><rect x="481" y="337.5" width="11" height="12.5" fill="#FFE699"/><rect x="481" y="350" width="11" height="12.5" fill="#FFD966"/><rect x="481" y="362.5" width="11" height="12.5" fill="#BF9000"/><rect x="481" y="375" width="11" height="12" fill="#7F6000"/><rect x="497.5" y="324.500" width="12" height="63" fill="none" stroke="#e2e2e2"/><rect x="498" y="325" width="11" height="12.5" fill="#DAE3F3"/><rect x="498" y="337.5" width="11" height="12.5" fill="#B4C7E7"/><rect x="498" y="350" width="11" height="12.5" fill="#8FAADC"/><rect x="498" y="362.5" width="11" height="12.5" fill="#2F5597"/><rect x="498" y="375" width="11" height="12" fill="#203864"/><rect x="514.5" y="324.500" width="12" height="63" fill="none" stroke="#e2e2e2"/><rect x="515" y="325" width="11" height="12.5" fill="#E2F0D9"/><rect x="515" y="337.5" width="11" height="12.5" fill="#C5E0B4"/><rect x="515" y="350" width="11" height="12.5" fill="#A9D18E"/><rect x="515" y="362.5" width="11" height="12.5" fill="#548235"/><rect x="515" y="375" width="11" height="12" fill="#385723"/><rect x="361.5" y="417.500" width="12" height="12" fill="#C00000" stroke="#e2e2e2"/><rect x="378.5" y="417.500" width="12" height="12" fill="#FF0000" stroke="#e2e2e2"/><rect x="395.5" y="417.500" width="12" height="12" fill="#FFC000" stroke="#e2e2e2"/><rect x="412.5" y="417.500" width="12" height="12" fill="#FFFF00" stroke="#e2e2e2"/><rect x="429.5" y="417.500" width="12" height="12" fill="#92D050" stroke="#e2e2e2"/><rect x="446.5" y="417.500" width="12" height="12" fill="#00B050" stroke="#e2e2e2"/><rect x="463.5" y="417.500" width="12" height="12" fill="#00B0F0" stroke="#e2e2e2"/><rect x="480.5" y="417.500" width="12" height="12" fill="#0070C0" stroke="#e2e2e2"/><rect x="497.5" y="417.500" width="12" height="12" fill="#002060" stroke="#e2e2e2"/><rect x="514.5" y="417.500" width="12" height="12" fill="#7030A0" stroke="#e2e2e2"/></svg>
<svg width="962" height="525" style="left:0;top:0" fill="none">
 <!-- more colors wheel -->
 <g transform="translate(370.400 469.500)">
  <path d="M0 0 L0 -8 A8 8 0 0 1 7.600 -2.500 Z" fill="#e8c28a"/>
  <path d="M0 0 L7.600 -2.500 A8 8 0 0 1 4.700 6.500 Z" fill="#7fae8c"/>
  <path d="M0 0 L4.700 6.500 A8 8 0 0 1 -4.700 6.500 Z" fill="#4a7fc1"/>
  <path d="M0 0 L-4.700 6.500 A8 8 0 0 1 -7.600 -2.500 Z" fill="#d9604c"/>
  <path d="M0 0 L-7.600 -2.500 A8 8 0 0 1 0 -8 Z" fill="#e89a4a"/>
  <path d="M0 0 L0 -8 M0 0 L7.600 -2.500 M0 0 L4.700 6.500 M0 0 L-4.700 6.500 M0 0 L-7.600 -2.500" stroke="#fff" stroke-width="1.200"/>
 </g>
 <!-- weight -->
 <g shape-rendering="crispEdges" fill="#3a6fb5">
 <rect x="363" y="487" width="15" height="1"/>
 <rect x="363" y="490" width="15" height="1.500"/>
 <rect x="363" y="493" width="15" height="2"/>
 <rect x="363" y="497" width="15" height="2.700"/>
 </g>
 <!-- dashes -->
 <path d="M363 513.500 H378" stroke="#666" stroke-width="1"/>
 <path d="M363 516.500 H378" stroke="#555" stroke-width="1" stroke-dasharray="1 1"/>
 <path d="M363 519.500 H378" stroke="#555" stroke-width="1" stroke-dasharray="2 1"/>
 <path d="M363 522.500 H378" stroke="#555" stroke-width="1" stroke-dasharray="3 1 1 1"/>
 <!-- submenu arrows -->
 <path d="M529 490 v7 l3.500 -3.500 z" fill="#666"/>
 <path d="M529 514 v7 l3.500 -3.500 z" fill="#666"/>
 <!-- underline accelerators -->
 <!-- red arrow -->
 <path d="M682 442.300 L530 447.300 L528.500 442 L517.500 451 L529 459.500 L530 454.300 L682 444.300 Z" fill="#9a9a9a" opacity=".6"/>
 <path d="M682 441 L530 446 L528.500 440.800 L517 449.800 L528.500 458.500 L530 453 L682 443 Z" fill="#e23b33"/>
</svg>
<span class="t" style="left:269.26px;top:255.7px;font-size:12px;color:#444444;letter-spacing:-0.17px;transform:scaleX(0.940);">Стиль</span>
<span class="t" style="left:308.22px;top:255.7px;font-size:12px;color:#444444;transform:scaleX(0.940);">Заливка</span>
<span class="t" style="left:360.87px;top:255.7px;font-size:12px;color:#444444;transform:scaleX(0.961);">Контур</span>
<span class="t" style="left:366.74px;top:284.4px;font-size:12px;color:#4a4a4a;font-weight:bold;transform:scaleX(0.992);">Цвета темы</span>
<span class="t" style="left:366.58px;top:395.4px;font-size:12px;color:#4a4a4a;font-weight:bold;letter-spacing:-0.04px;transform:scaleX(0.940);">Стандартные цвета</span>
<span class="t" style="left:390.39px;top:436.5px;font-size:12px;color:#262626;letter-spacing:0.04px;"><u>Н</u>ет контура</span>
<span class="t" style="left:390.50px;top:462.0px;font-size:12px;color:#444444;transform:scaleX(0.980);">Дру<u>г</u>ие цвета контура...</span>
<span class="t" style="left:390.26px;top:486.0px;font-size:12px;color:#444444;letter-spacing:0.27px;"><u>Т</u>олщина</span>
<span class="t" style="left:389.53px;top:510.0px;font-size:12px;color:#444444;letter-spacing:0.12px;"><u>Ш</u>трихи</span>
</div>
</body>
</html>
